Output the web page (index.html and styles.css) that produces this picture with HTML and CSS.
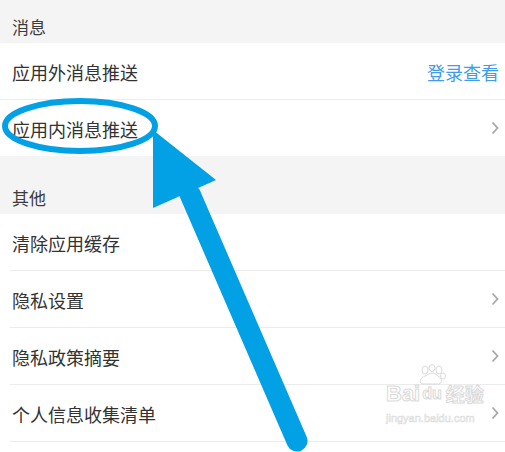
FILE: index.html
```html
<!DOCTYPE html>
<html>
<head>
  <title>设置</title>
  <link rel="stylesheet" href="styles.css">
</head>
<body>
  <div class="page">
    <div class="section-title first">消息</div>
    <div class="row full-line">
      <span class="label">应用外消息推送</span>
      <span class="link">登录查看</span>
    </div>
    <div class="row last">
      <span class="label">应用内消息推送</span>
      <svg class="chevron" viewBox="0 0 8 14"><polyline points="1.5,1.5 6.5,7 1.5,12.5" /></svg>
    </div>

    <div class="section-title">其他</div>
    <div class="row">
      <span class="label">清除应用缓存</span>
    </div>
    <div class="row">
      <span class="label">隐私设置</span>
      <svg class="chevron" viewBox="0 0 8 14"><polyline points="1.5,1.5 6.5,7 1.5,12.5" /></svg>
    </div>
    <div class="row">
      <span class="label">隐私政策摘要</span>
      <svg class="chevron" viewBox="0 0 8 14"><polyline points="1.5,1.5 6.5,7 1.5,12.5" /></svg>
    </div>
    <div class="row">
      <span class="label">个人信息收集清单</span>
      <svg class="chevron" viewBox="0 0 8 14"><polyline points="1.5,1.5 6.5,7 1.5,12.5" /></svg>
    </div>
    <div class="row"></div>

    <!-- annotation drawn over the screenshot -->
    <svg class="annotation" viewBox="0 0 505 452" xmlns="http://www.w3.org/2000/svg">
      <polygon points="153,130 153,208 216,180" fill="#02a0e4" />
      <line x1="190" y1="194" x2="297" y2="441" stroke="#02a0e4" stroke-width="21" stroke-linecap="round" />
      <ellipse cx="80" cy="126" rx="75" ry="25" fill="none" stroke="#02a0e4" stroke-width="6" />
    </svg>

    <div class="watermark">
      <div class="wm-top">
        <span>Bai</span>
        <span class="wm-du">
          <svg class="paw" viewBox="0 0 30 22">
            <ellipse cx="8" cy="6" rx="3" ry="4" />
            <ellipse cx="15" cy="4" rx="3" ry="3.5" />
            <ellipse cx="22" cy="6" rx="3" ry="4" />
            <ellipse cx="26" cy="12" rx="2.5" ry="3" />
            <path d="M6 20 C2 20 2 14 8 12 C11 11 12 9 15 9 C18 9 20 11 22 13 C26 15 25 21 20 20 Z" />
          </svg>
          du
        </span>
        <span>经验</span>
      </div>
      <div class="wm-url">jingyan.baidu.com</div>
    </div>
  </div>
</body>
</html>
```

FILE: styles.css
```css
body {
  margin: 0;
  background: #ffffff;
  font-family: "Noto Sans CJK SC", "Noto Sans", sans-serif;
}
.page {
  position: relative;
  width: 505px;
  height: 452px;
  overflow: hidden;
}
.section-title {
  background: #f4f4f4;
  color: #3c3c3c;
  font-size: 17px;
  line-height: 20px;
  padding: 32px 12px 6px;
}
.section-title.first {
  padding-top: 17px;
}
.row {
  display: flex;
  align-items: center;
  justify-content: space-between;
  height: 56px;
  margin-left: 10px;
  padding: 0 6px 0 2px;
  border-bottom: 1px solid #ececec;
}
.row.full-line {
  margin-left: 0;
  padding-left: 12px;
}
.row.last {
  border-bottom: none;
}
.label {
  color: #333333;
  font-size: 18px;
  line-height: 24px;
  padding-top: 2px;
}
.link {
  color: #3f9cec;
  font-size: 18px;
  line-height: 24px;
  padding-top: 2px;
}
.chevron {
  width: 8px;
  height: 14px;
  fill: none;
  stroke: #a8a8a8;
  stroke-width: 1.8;
}
.annotation {
  position: absolute;
  left: 0;
  top: 0;
  width: 505px;
  height: 452px;
}
.watermark {
  position: absolute;
  left: 386px;
  top: 382px;
  color: #ffffff;
  -webkit-text-stroke: 1px #dadada;
  font-family: "Liberation Sans", sans-serif;
}
.wm-top {
  display: flex;
  align-items: flex-end;
  font-size: 22px;
  font-weight: bold;
  line-height: 24px;
}
.wm-top span:last-child {
  font-family: "Noto Sans CJK SC", sans-serif;
  font-size: 19px;
  margin-left: 2px;
}
.wm-du {
  position: relative;
  font-size: 16px;
  padding: 0 2px;
}
.paw {
  position: absolute;
  left: -3px;
  top: -18px;
  width: 30px;
  height: 22px;
  fill: none;
  stroke: #dadada;
  stroke-width: 1;
}
.wm-url {
  font-size: 11px;
  -webkit-text-stroke: 0.6px #dcdcdc;
  margin-top: 6px;
}
```
